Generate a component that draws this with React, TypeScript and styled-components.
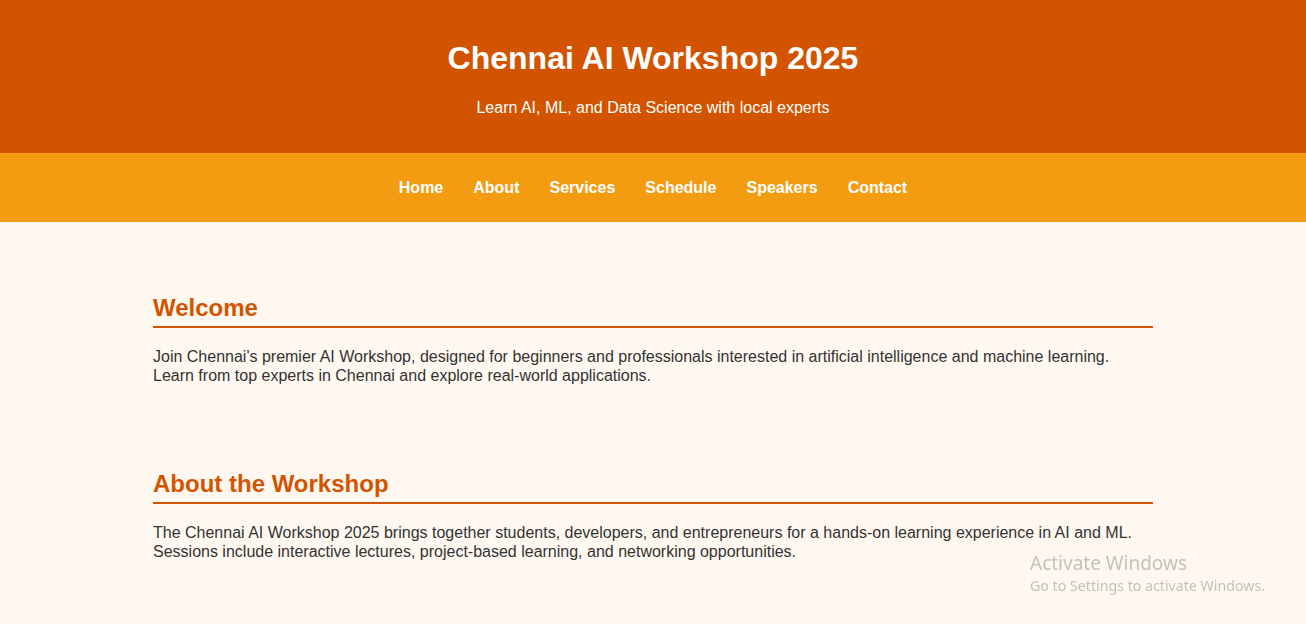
import React from "react";
import styled, { createGlobalStyle } from "styled-components";

const GlobalStyle = createGlobalStyle`
  html, body {
    margin: 0;
    padding: 0;
  }
  body {
    background: #fff8f0;
    font-family: "Liberation Sans", Arial, sans-serif;
    color: #333333;
  }
`;

const Header = styled.header`
  background: #d35400;
  color: #ffffff;
  text-align: center;
  padding: 40px 20px 36px;
`;

const Title = styled.h1`
  margin: 0 0 22px;
  font-size: 32px;
  font-weight: bold;
  line-height: 37px;
`;

const Tagline = styled.p`
  margin: 0;
  font-size: 16px;
  line-height: 18px;
`;

const Nav = styled.nav`
  background: #f39c12;
  padding: 25px 0;
  display: flex;
  justify-content: center;
`;

const NavLink = styled.a`
  color: #ffffff;
  text-decoration: none;
  font-weight: bold;
  font-size: 16px;
  line-height: 19px;
  margin: 0 15px;
`;

const Main = styled.main`
  max-width: 1000px;
  margin: 0 auto;
  padding: 72px 0 0;
`;

const Section = styled.section<{ $last?: boolean }>`
  margin: 0 0 ${(p) => (p.$last ? "0" : "85px")};
`;

const SectionTitle = styled.h2`
  margin: 0 0 19px;
  color: #d35400;
  font-size: 24px;
  font-weight: bold;
  line-height: 28px;
  padding-bottom: 4px;
  border-bottom: 2px solid #d35400;
`;

const Text = styled.p`
  margin: 0;
  font-size: 16px;
  line-height: 19px;
`;

const Watermark = styled.div`
  position: fixed;
  left: 1030px;
  top: 552px;
  font-family: "Noto Sans", "Open Sans", sans-serif;
  color: #c4c0bc;
  pointer-events: none;
`;

const WatermarkTitle = styled.div`
  font-size: 19px;
  line-height: 22px;
`;

const WatermarkSub = styled.div`
  margin-top: 3px;
  font-size: 14.2px;
  line-height: 18px;
`;

const links = ["Home", "About", "Services", "Schedule", "Speakers", "Contact"];

export default function App() {
  return (
    <>
      <GlobalStyle />
      <Header>
        <Title>Chennai AI Workshop 2025</Title>
        <Tagline>Learn AI, ML, and Data Science with local experts</Tagline>
      </Header>
      <Nav>
        {links.map((l) => (
          <NavLink key={l} href={`#${l.toLowerCase()}`}>
            {l}
          </NavLink>
        ))}
      </Nav>
      <Main>
        <Section id="home">
          <SectionTitle>Welcome</SectionTitle>
          <Text>
            Join Chennai's premier AI Workshop, designed for beginners and professionals interested in artificial
            intelligence and machine learning. Learn from top experts in Chennai and explore real-world applications.
          </Text>
        </Section>
        <Section id="about" $last>
          <SectionTitle>About the Workshop</SectionTitle>
          <Text>
            The Chennai AI Workshop 2025 brings together students, developers, and entrepreneurs for a hands-on
            learning experience in AI and ML. Sessions include interactive lectures, project-based learning, and
            networking opportunities.
          </Text>
        </Section>
      </Main>
      <Watermark>
        <WatermarkTitle>Activate Windows</WatermarkTitle>
        <WatermarkSub>Go to Settings to activate Windows.</WatermarkSub>
      </Watermark>
    </>
  );
}
